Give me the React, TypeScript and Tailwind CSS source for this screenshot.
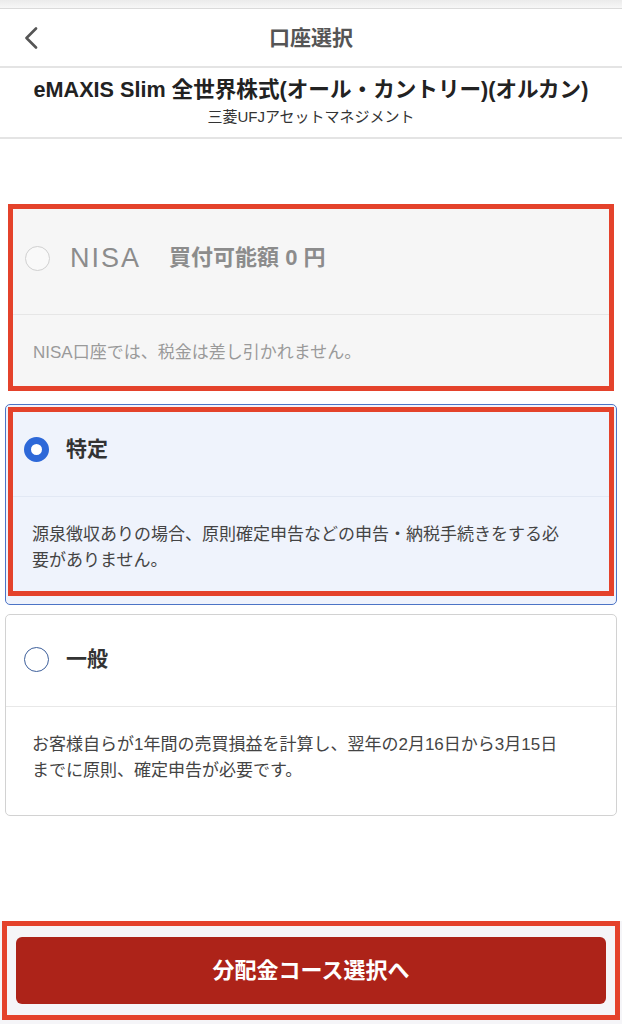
import React from "react";

const font = "font-['Liberation_Sans','Noto_Sans_CJK_JP',sans-serif]";

function ChevronLeft() {
  return (
    <svg width="14" height="22" viewBox="0 0 14 22" fill="none">
      <path d="M12 1.5 L2.5 11 L12 20.5" stroke="#555" strokeWidth="2.6" strokeLinecap="round" strokeLinejoin="round" />
    </svg>
  );
}

export default function App() {
  return (
    <div className={`${font} h-[1024px] w-[622px] bg-white flex flex-col overflow-hidden`}>
      {/* ステータス帯 */}
      <div className="h-[9px] bg-gradient-to-b from-[#ebebeb] to-[#f7f7f7] border-b border-[#dadada]" />

      {/* ヘッダー */}
      <div className="h-[59px] grid grid-cols-[60px_1fr_60px] items-center border-b-2 border-[#e4e4e4]">
        <div className="pl-[24px] flex items-center">
          <ChevronLeft />
        </div>
        <h1 className="text-center text-[21px] font-bold text-[#555]">口座選択</h1>
        <div />
      </div>

      {/* 銘柄 */}
      <div className="pt-[8px] pb-[10px] border-b-2 border-[#e4e4e4] text-center">
        <p className="text-[21.6px] leading-[28px] font-bold text-[#222]">
          eMAXIS Slim 全世界株式(オール・カントリー)(オルカン)
        </p>
        <p className="mt-[3px] text-[15px] leading-[20px] text-[#333]">
          三菱UFJアセットマネジメント
        </p>
      </div>

      {/* 口座カード */}
      <div className="mt-[65px] px-[5px] flex flex-col">
        {/* NISA */}
        <div className="mx-[3px] border-[5px] border-[#e4422b] bg-[#f6f6f6]">
          <div className="pt-[33px] pb-[40px] pl-[12px] flex items-center h-[105px]">
            <span className="w-[25px] h-[25px] rounded-full border-[1.5px] border-[#d0d0d0] bg-[#f9f9f9]" />
            <span className="ml-[20px] text-[27px] leading-[32px] tracking-[2px] text-[#8c8c8c]">NISA</span>
            <span className="ml-[28px] text-[22px] leading-[32px] font-bold text-[#8c8c8c]">買付可能額 0 円</span>
          </div>
          <div className="h-px bg-[#e6e6e6]" />
          <p className="pt-[25px] pb-[20px] pl-[20px] text-[17px] leading-[26px] text-[#9a9a9a]">
            NISA口座では、税金は差し引かれません。
          </p>
        </div>

        {/* 特定 */}
        <div className="relative mt-[13px] rounded-[5px] border border-[#4c74c6] bg-[#eff3fc]">
          <div className="pt-[29px] pb-[32px] pl-[18px] flex items-center">
            <span className="w-[25px] h-[25px] rounded-full border-[7px] border-[#2d68d8] bg-white" />
            <span className="ml-[17px] text-[21px] leading-[30px] font-bold text-[#333]">特定</span>
          </div>
          <div className="mx-[2px] h-px bg-[#e2e8f4]" />
          <p className="pt-[25px] pb-[30px] pl-[26px] w-[564px] text-[17px] leading-[26px] text-[#444]">
            源泉徴収ありの場合、原則確定申告などの申告・納税手続きをする必要がありません。
          </p>
          <div className="absolute left-[2px] top-[2px] right-[2px] bottom-[8px] border-[5px] border-[#e4422b] pointer-events-none" />
        </div>

        {/* 一般 */}
        <div className="mt-[9px] rounded-[5px] border border-[#d2d2d2] bg-white">
          <div className="pt-[29px] pb-[32px] pl-[18px] flex items-center">
            <span className="w-[25px] h-[25px] rounded-full border-[1.5px] border-[#3d5f9b] bg-white" />
            <span className="ml-[17px] text-[21px] leading-[30px] font-bold text-[#333]">一般</span>
          </div>
          <div className="h-px bg-[#e8e8e8]" />
          <p className="pt-[25px] pb-[31px] pl-[26px] w-[564px] text-[17px] leading-[26px] text-[#444]">
            お客様自らが1年間の売買損益を計算し、翌年の2月16日から3月15日までに原則、確定申告が必要です。
          </p>
        </div>
      </div>

      {/* フッター */}
      <div className="mt-auto bg-[#f5f5f8] px-[2px] pb-[4px]">
        <div className="border-[5px] border-[#e4422b] px-[9px] py-[11px]">
          <button className="w-full h-[67px] rounded-[6px] bg-[#ad2319] text-white text-[22px] font-bold">
            分配金コース選択へ
          </button>
        </div>
      </div>
    </div>
  );
}
